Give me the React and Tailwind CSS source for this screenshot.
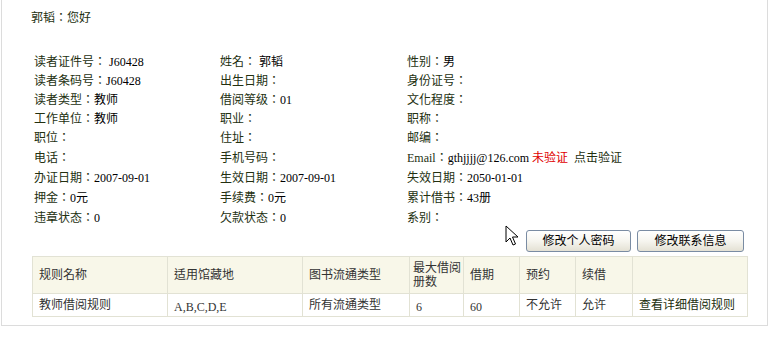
import * as React from "react";

const FONT = "font-['Liberation_Serif','Noto_Sans_CJK_TC',serif]";

const rows = [
  [
    { label: "读者证件号：", value: " J60428" },
    { label: "姓名：", value: " 郭韬" },
    { label: "性别：", value: "男" },
  ],
  [
    { label: "读者条码号：", value: "J60428" },
    { label: "出生日期：", value: "" },
    { label: "身份证号：", value: "" },
  ],
  [
    { label: "读者类型：", value: "教师" },
    { label: "借阅等级：", value: "01" },
    { label: "文化程度：", value: "" },
  ],
  [
    { label: "工作单位：", value: "教师" },
    { label: "职业：", value: "" },
    { label: "职称：", value: "" },
  ],
  [
    { label: "职位：", value: "" },
    { label: "住址：", value: "" },
    { label: "邮编：", value: "" },
  ],
  [
    { label: "电话：", value: "" },
    { label: "手机号码：", value: "" },
    { label: "Email：", value: "gthjjjj@126.com", email: true },
  ],
  [
    { label: "办证日期：", value: "2007-09-01" },
    { label: "生效日期：", value: "2007-09-01" },
    { label: "失效日期：", value: "2050-01-01" },
  ],
  [
    { label: "押金：", value: "0元" },
    { label: "手续费：", value: "0元" },
    { label: "累计借书：", value: "43册" },
  ],
  [
    { label: "违章状态：", value: "0" },
    { label: "欠款状态：", value: "0" },
    { label: "系别：", value: "" },
  ],
];

const rowHeights = ["h-[19px]", "h-[19px]", "h-[19px]", "h-[19px]", "h-[19px]", "h-[21px]", "h-[20px]", "h-[20px]", "h-[20px]"];

function Field({ label, value, email }) {
  return (
    <div className="whitespace-pre">
      <span className="text-[#233010]">{label}</span>
      <span className="text-black">{value}</span>
      {email && (
        <>
          <span className="text-[#e00000]"> 未验证</span>
          <span className="text-[#233010]">  点击验证</span>
        </>
      )}
    </div>
  );
}

function XpButton({ children }) {
  return (
    <button className="h-[22px] px-0 rounded-[3px] border border-[#7a8ca3] bg-gradient-to-b from-white via-[#f6f5ef] to-[#e4e1d4] text-[12px] leading-[20px] text-black">
      {children}
    </button>
  );
}

function Cursor() {
  return (
    <svg
      className="absolute left-[505px] top-[225px]"
      width="14"
      height="22"
      viewBox="0 0 14 22"
    >
      <path
        d="M1 1 L1 17 L5 13 L8 20 L10.5 19 L7.5 12 L13 12 Z"
        fill="white"
        stroke="black"
        strokeWidth="1"
        strokeLinejoin="miter"
      />
    </svg>
  );
}

export default function App() {
  const th = "border border-[#e2e2d4] px-[6px] text-left font-normal align-middle leading-[14px]";
  const td = "border border-[#e2e2d4] px-[6px] text-left align-middle";
  return (
    <div className={`relative w-[773px] h-[343px] bg-white text-[12px] ${FONT}`}>
      <div className="ml-[1px] w-[767px] h-[326px] border-l border-r border-b border-[#dcdcdc]">
        <div className="pl-[29px] pt-[8px] h-[28px] leading-[20px] text-[#233010]">郭韬：您好</div>

        <div className="pl-[32px] mt-[24px]">
          {rows.map((r, i) => (
            <div key={i} className={`grid grid-cols-[186px_187px_1fr] items-center ${rowHeights[i]}`}>
              {r.map((f, j) => (
                <Field key={j} {...f} />
              ))}
            </div>
          ))}
        </div>

        <div className="flex justify-end gap-[6px] pr-[23px] mt-[2px]">
          <div className="w-[105px] flex">
            <XpButton>
              <span className="block w-[103px]">修改个人密码</span>
            </XpButton>
          </div>
          <div className="w-[107px] flex">
            <XpButton>
              <span className="block w-[105px]">修改联系信息</span>
            </XpButton>
          </div>
        </div>

        <table className="ml-[30px] mt-[4px] w-[716px] table-fixed border-collapse text-[#333]">
          <colgroup>
            <col className="w-[135px]" />
            <col className="w-[135px]" />
            <col className="w-[107px]" />
            <col className="w-[54px]" />
            <col className="w-[56px]" />
            <col className="w-[56px]" />
            <col className="w-[57px]" />
            <col />
          </colgroup>
          <thead>
            <tr className="h-[37px] bg-[#f8f7e9]">
              <th className={th}>规则名称</th>
              <th className={th}>适用馆藏地</th>
              <th className={th}>图书流通类型</th>
              <th className={`${th} pl-[3px] pr-0`}>最大借阅册数</th>
              <th className={th}>借期</th>
              <th className={th}>预约</th>
              <th className={th}>续借</th>
              <th className={th}></th>
            </tr>
          </thead>
          <tbody>
            <tr className="h-[23px]">
              <td className={td}>教师借阅规则</td>
              <td className={`${td} pt-[3px]`}>A,B,C,D,E</td>
              <td className={td}>所有流通类型</td>
              <td className={`${td} pt-[3px]`}>6</td>
              <td className={`${td} pt-[3px]`}>60</td>
              <td className={td}>不允许</td>
              <td className={td}>允许</td>
              <td className={`${td} text-[#233010]`}>查看详细借阅规则</td>
            </tr>
          </tbody>
        </table>
      </div>
      <Cursor />
    </div>
  );
}
